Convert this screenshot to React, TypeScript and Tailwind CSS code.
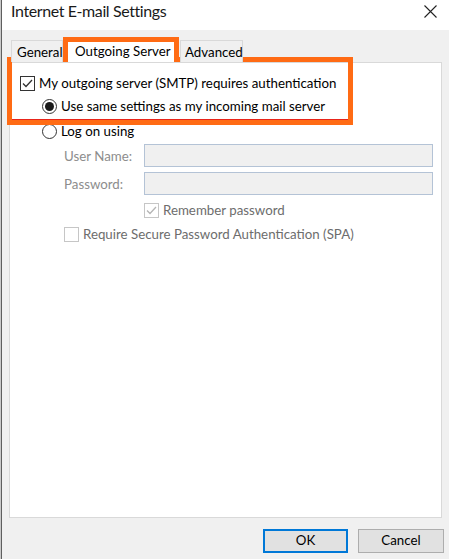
const font = "font-['Lato','Noto_Sans',sans-serif]";

function CheckBox({ checked, disabled }: { checked?: boolean; disabled?: boolean }) {
  return (
    <div
      className={`w-[15px] h-[15px] shrink-0 border bg-white flex items-center justify-center ${
        disabled ? "border-[#c6c6c6]" : "border-[#333333]"
      }`}
    >
      {checked && (
        <svg width="11" height="9" viewBox="0 0 11 9">
          <polyline
            points="1,4.5 4,7.5 10,1"
            fill="none"
            stroke={disabled ? "#b5b5b5" : "#333333"}
            strokeWidth="1.3"
          />
        </svg>
      )}
    </div>
  );
}

function Radio({ checked }: { checked?: boolean }) {
  return (
    <div className="w-[15px] h-[15px] shrink-0 rounded-full border border-[#333333] bg-white flex items-center justify-center">
      {checked && <div className="w-[9px] h-[9px] rounded-full bg-[#1a1a1a]" />}
    </div>
  );
}

export default function App() {
  return (
    <div className={`relative w-[449px] h-[559px] overflow-hidden bg-[#f0f0f0] flex text-[13.3px] leading-none text-black whitespace-nowrap ${font}`}>
      {/* edge of the window behind */}
      <div className="w-[1px] bg-[#c9c9c9]" />
      <div className="w-[1px] bg-[#5f5f5f]" />

      <div className="flex-1 flex flex-col">
        {/* Title bar */}
        <div className="h-[30px] bg-white flex items-start justify-between pl-[9px] pr-[12px]">
          <span className="mt-[3px] text-[16px] tracking-[-0.4px] text-[#1a1a1a]">Internet E-mail Settings</span>
          <svg width="13" height="13" viewBox="0 0 13 13" className="mt-[5px]">
            <path d="M0.5 0.5 L12.5 12.5 M12.5 0.5 L0.5 12.5" stroke="#222" strokeWidth="1.1" fill="none" />
          </svg>
        </div>

        {/* Tabs */}
        <div className="mx-[7px] mt-[7px] flex items-end h-[25px] relative z-10">
          <div className="ml-[2px] w-[52px] h-[22px] border border-b-0 border-[#d9d9d9] bg-[#f0f0f0] flex items-center pl-[5px] pt-[3px]">
            General
          </div>
          <div className="w-[116px] h-[25px] border-[5px] border-b-0 border-[#ff6b14] bg-white flex items-center pl-[7px] pb-[1px]">
            Outgoing Server
          </div>
          <div className="ml-[1px] w-[63px] h-[22px] border border-b-0 border-[#d9d9d9] bg-[#f0f0f0] flex items-center pl-[4px] pt-[3px]">
            Advanced
          </div>
        </div>

        {/* Panel */}
        <div className="mx-[7px] h-[456px] bg-white border border-[#d9d9d9] flex flex-col pt-[9px] pl-[10px] pr-[8px]">
          <div className="h-[22px] flex items-center gap-[4px]">
            <CheckBox checked />
            <span className="mt-[2px]">My outgoing server (SMTP) requires authentication</span>
          </div>
          <div className="h-[22px] mt-[1px] ml-[22px] flex items-center gap-[4px]">
            <Radio checked />
            <span className="mt-[2px]">Use same settings as my incoming mail server</span>
          </div>
          <div className="h-[22px] mt-[3px] ml-[22px] flex items-center gap-[4px]">
            <Radio />
            <span className="mt-[2px]">Log on using</span>
          </div>
          <div className="h-[23px] mt-[2px] ml-[44px] flex items-center">
            <span className="w-[80px] mt-[2px] text-[#8d8d8d]">User Name:</span>
            <div className="flex-1 h-full border border-[#b4c3d6] bg-[#f0f0f0]" />
          </div>
          <div className="h-[23px] mt-[5px] ml-[44px] flex items-center">
            <span className="w-[80px] mt-[2px] text-[#8d8d8d]">Password:</span>
            <div className="flex-1 h-full border border-[#b4c3d6] bg-[#f0f0f0]" />
          </div>
          <div className="h-[22px] mt-[4px] ml-[124px] flex items-center gap-[4px] text-[#6d6d6d]">
            <CheckBox checked disabled />
            <span className="mt-[2px]">Remember password</span>
          </div>
          <div className="h-[22px] mt-[2px] ml-[44px] flex items-center gap-[4px] text-[#6d6d6d]">
            <CheckBox disabled />
            <span className="mt-[2px]">Require Secure Password Authentication (SPA)</span>
          </div>
        </div>

        {/* Buttons */}
        <div className="mt-[11px] pr-[5px] flex justify-end gap-[10px]">
          <button className="w-[85px] h-[24px] bg-[#e1e1e1] border-2 border-[#0078d7] flex items-center justify-center">
            OK
          </button>
          <button className="w-[86px] h-[24px] bg-[#e1e1e1] border border-[#adadad] flex items-center justify-center">
            Cancel
          </button>
        </div>
      </div>

      {/* annotation highlight over the first two options */}
      <div className="absolute left-[7px] top-[57px] w-[346px] h-[68px] border-[5px] border-[#ff6b14] shadow-[inset_0_-1px_0_#e8251a] pointer-events-none" />
    </div>
  );
}
